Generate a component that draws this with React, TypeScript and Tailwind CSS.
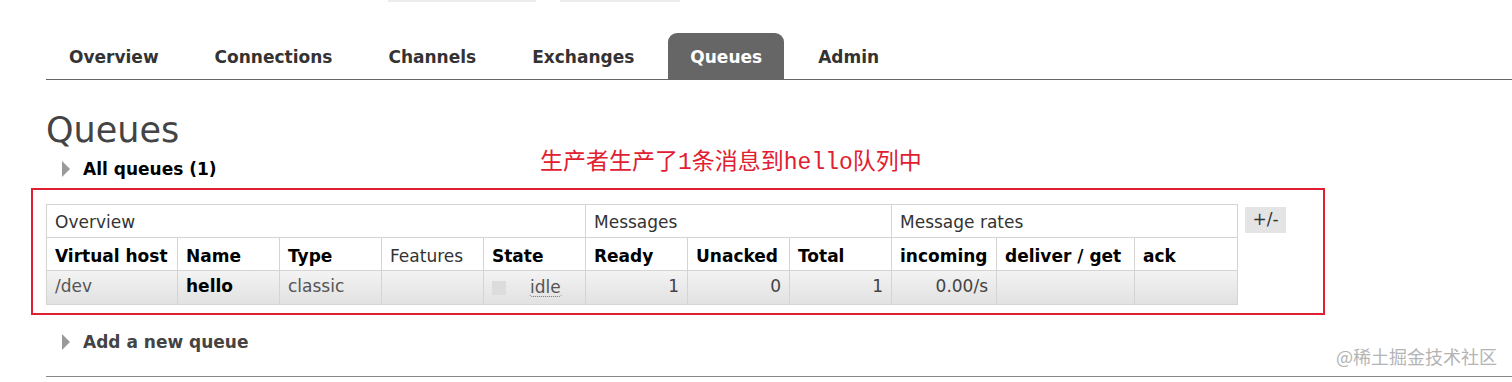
import React from "react";

const tabs = ["Overview", "Connections", "Channels", "Exchanges", "Queues", "Admin"];

function Triangle() {
  return (
    <div className="h-0 w-0 border-y-[8px] border-l-[8px] border-y-transparent border-l-[#9a9a9a]" />
  );
}

export default function App() {
  const th = "border border-[#d4d4d4] px-[8px] text-left align-middle";
  const td = "border border-[#d4d4d4] px-[8px] align-middle";
  return (
    <div className="relative h-[382px] w-[1512px] overflow-hidden bg-white font-['DejaVu_Sans',sans-serif] text-[17px]">
      {/* fragments of an element above */}
      <div className="flex h-[33px] items-start">
        <div className="ml-[388px] h-[2px] w-[148px] bg-[#ececec]" />
        <div className="ml-[24px] h-[2px] w-[120px] bg-[#ececec]" />
      </div>

      {/* nav tabs */}
      <nav className="ml-[46px] flex h-[47px] gap-[12px] border-b border-[#666] pl-[1px]">
        {tabs.map((t) => (
          <div
            key={t}
            className={
              t === "Queues"
                ? "flex h-full items-center rounded-t-[9px] bg-[#666] px-[22px] pt-[3px] font-bold text-white"
                : "flex h-full items-center px-[22px] pt-[3px] font-bold text-[#333]"
            }
          >
            {t}
          </div>
        ))}
      </nav>

      {/* heading */}
      <h1 className="pl-[46px] pt-[33px] text-[35px] font-normal leading-[35px] text-[#444]">Queues</h1>

      {/* all queues */}
      <div className="mt-[11px] flex items-center gap-[13px] pl-[62px] leading-[20px]">
        <Triangle />
        <span className="font-bold text-black">All queues (1)</span>
      </div>

      {/* table */}
      <div className="mt-[25px] flex items-start pl-[46px]">
        <table className="table-fixed border-collapse border border-[#cfcfcf] text-[17px] leading-[20px]">
          <colgroup>
            <col className="w-[131px]" />
            <col className="w-[102px]" />
            <col className="w-[102px]" />
            <col className="w-[102px]" />
            <col className="w-[102px]" />
            <col className="w-[102px]" />
            <col className="w-[102px]" />
            <col className="w-[102px]" />
            <col className="w-[105px]" />
            <col className="w-[138px]" />
            <col className="w-[103px]" />
          </colgroup>
          <thead>
            <tr className="h-[33px] bg-white">
              <th colSpan={5} className={th + " pt-[2px] font-normal text-[#333]"}>Overview</th>
              <th colSpan={3} className={th + " pt-[2px] font-normal text-[#333]"}>Messages</th>
              <th colSpan={3} className={th + " pt-[2px] font-normal text-[#333]"}>Message rates</th>
            </tr>
            <tr className="h-[33px] bg-white">
              <th className={th + " whitespace-nowrap pt-[4px] font-bold text-black"}>Virtual host</th>
              <th className={th + " pt-[4px] font-bold text-black"}>Name</th>
              <th className={th + " pt-[4px] font-bold text-black"}>Type</th>
              <th className={th + " pt-[4px] font-normal text-[#333]"}>Features</th>
              <th className={th + " pt-[4px] font-bold text-black"}>State</th>
              <th className={th + " pt-[4px] font-bold text-black"}>Ready</th>
              <th className={th + " pt-[4px] font-bold text-black"}>Unacked</th>
              <th className={th + " pt-[4px] font-bold text-black"}>Total</th>
              <th className={th + " pt-[4px] font-bold text-black"}>incoming</th>
              <th className={th + " whitespace-nowrap pt-[4px] font-bold text-black"}>deliver / get</th>
              <th className={th + " pt-[4px] font-bold text-black"}>ack</th>
            </tr>
          </thead>
          <tbody>
            <tr className="h-[34px] bg-gradient-to-b from-[#f3f3f3] to-[#e1e1e1]">
              <td className={td + " pb-[3px] text-[#555]"}>/dev</td>
              <td className={td + " pb-[3px] font-bold text-black"}>hello</td>
              <td className={td + " pb-[3px] text-[#555]"}>classic</td>
              <td className={td}></td>
              <td className={td}>
                <div className="flex items-center">
                  <div className="h-[14px] w-[14px] bg-[#dcdcdc]" />
                  <span className="ml-[23px] rounded-b-[4px] border-b border-dotted border-[#777] px-[1px] leading-[18px] text-[#555]">idle</span>
                </div>
              </td>
              <td className={td + " pb-[3px] text-right text-[#444]"}>1</td>
              <td className={td + " pb-[3px] text-right text-[#444]"}>0</td>
              <td className={td + " pb-[3px] text-right text-[#444]"}>1</td>
              <td className={td + " pb-[3px] text-right text-[#444]"}>0.00/s</td>
              <td className={td}></td>
              <td className={td}></td>
            </tr>
          </tbody>
        </table>
        <div className="ml-[7px] mt-[3px] flex h-[26px] w-[41px] items-center justify-center bg-[#e4e4e4] text-[17px] text-[#333]">
          +/-
        </div>
      </div>

      {/* add a new queue */}
      <div className="mt-[27px] flex items-center gap-[13px] pl-[62px] leading-[20px]">
        <Triangle />
        <span className="font-bold text-[#444]">Add a new queue</span>
      </div>

      <div className="ml-[46px] mt-[24px] h-[1px] bg-[#888]" />

      {/* annotations */}
      <div className="pointer-events-none absolute left-[31px] top-[188px] h-[127px] w-[1294px] border-2 border-[#e02030]" />
      <div className="absolute left-[540px] top-[149px] whitespace-nowrap font-['Liberation_Mono','Noto_Sans_CJK_SC',monospace] text-[23px] leading-[28px] text-[#e02030]">
        生产者生产了1条消息到hello队列中
      </div>
      <div className="absolute right-[15px] top-[344px] whitespace-nowrap font-['Noto_Sans_CJK_SC',sans-serif] text-[18px] leading-[24px] text-[#b4b4b4]">
        @稀土掘金技术社区
      </div>
    </div>
  );
}
